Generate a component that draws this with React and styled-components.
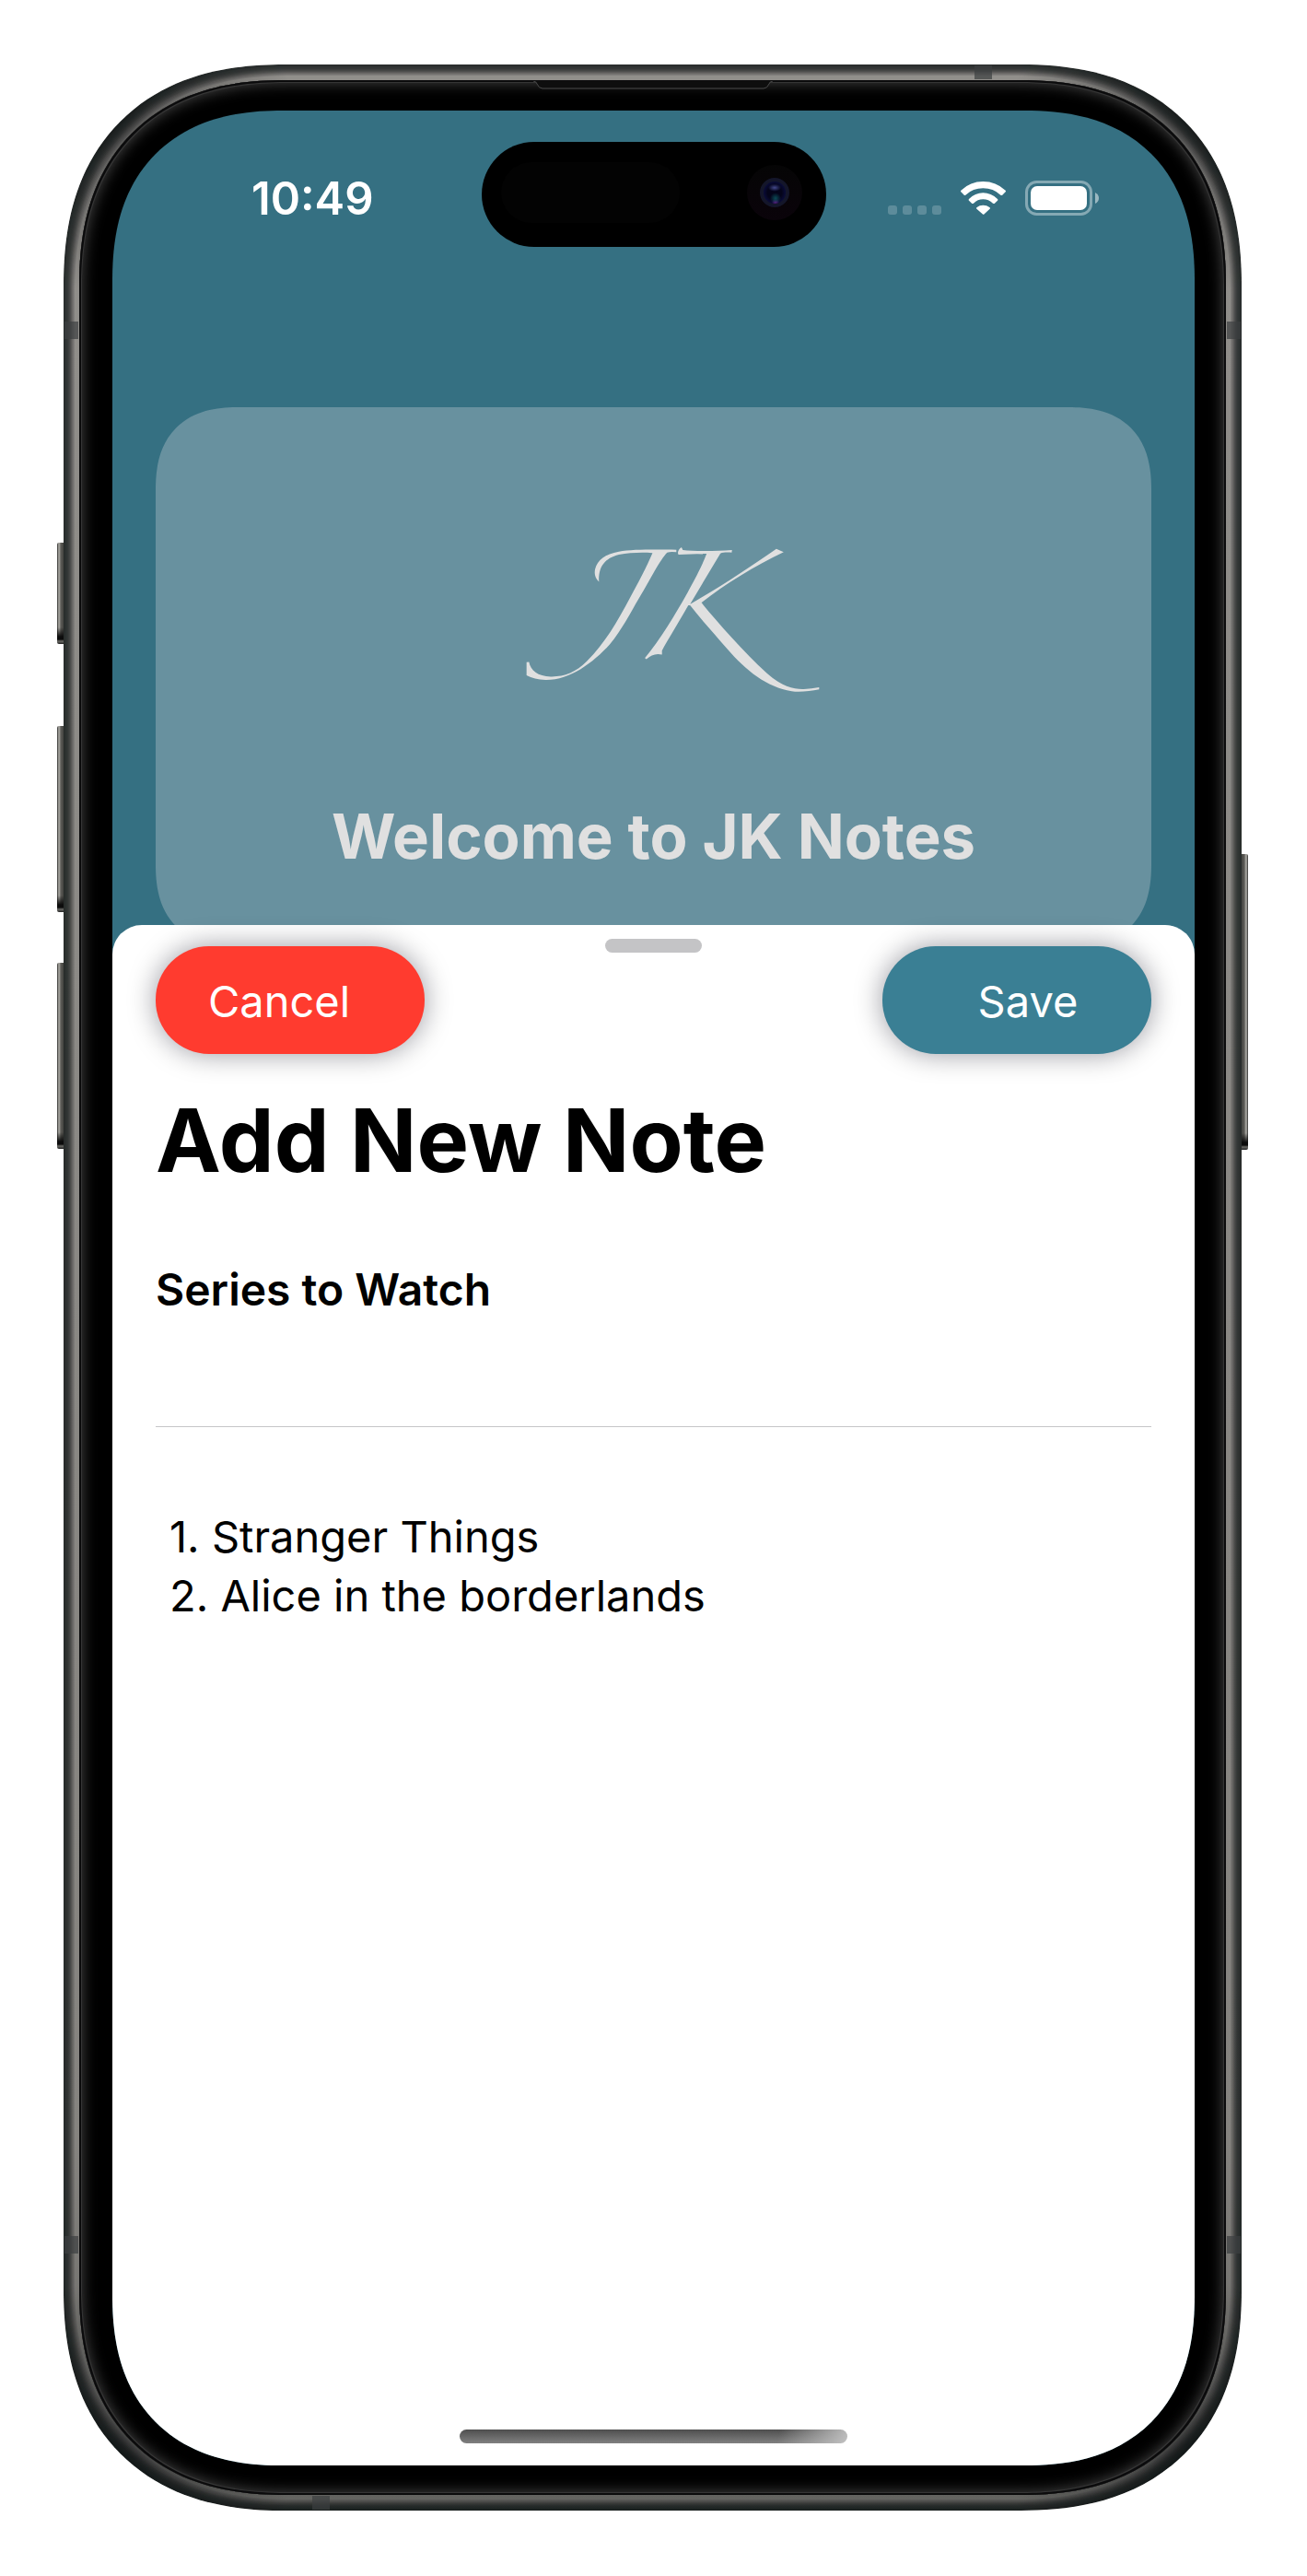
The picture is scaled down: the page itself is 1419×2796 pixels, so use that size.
import React, { useState } from "react";
import styled, { createGlobalStyle } from "styled-components";

const GlobalStyle = createGlobalStyle`
  *, *::before, *::after { box-sizing: border-box; }
  body {
    margin: 0;
    background: #ffffff;
    font-family: Inter, "Liberation Sans", sans-serif;
    color: #000000;
  }
  button, input, textarea { font: inherit; color: inherit; }
`;

const METAL = [
  [1, 0.55], [2, 0.72], [3, 0.68], [4, 0.67], [5, 0.65], [6, 0.6],
  [7, 0.54], [8, 0.47], [9, 0.38], [10, 0.28], [11, 0.2], [12, 0.12],
];

const metalRings = METAL.map(([spread, alpha], i) => {
  const next = METAL[i + 1] ? METAL[i + 1][1] : 0;
  const own = alpha > next ? 1 - (1 - alpha) / (1 - next) : 0;
  return `inset 0 0 0 ${spread}px rgba(8, 12, 14, ${own.toFixed(3)})`;
}).join(", ");

const Page = styled.div`
  display: flex;
  min-height: 100vh;
  padding: 70px 71px 71px 69px;
`;

const Device = styled.div`
  position: relative;
  flex: 1;
  display: flex;
  min-width: 0;
  padding: 17px;
  border-radius: 212px;
  background:
    radial-gradient(circle at 60px 60px, rgba(20, 22, 24, 0.5), transparent 190px),
    radial-gradient(circle at calc(100% - 60px) 60px, rgba(20, 22, 24, 0.5), transparent 190px),
    radial-gradient(circle at 60px calc(100% - 60px), rgba(20, 22, 24, 0.5), transparent 190px),
    radial-gradient(circle at calc(100% - 60px) calc(100% - 60px), rgba(20, 22, 24, 0.5), transparent 190px),
    linear-gradient(#918f8b, #85837f 85%, #62625f);
  box-shadow: ${metalRings};

  @supports (corner-shape: superellipse(1.2)) {
    border-radius: 240px;
    corner-shape: superellipse(1.22);
  }
`;

const Bezel = styled.div`
  flex: 1;
  display: flex;
  min-width: 0;
  padding: 33px 34px 32px 36px;
  border-radius: 195px;
  background: #000000;
  box-shadow:
    inset 0 0 0 2px #0b0b0c,
    inset 0 0 0 3px #353535,
    inset 0 0 16px 3px #464646;

  @supports (corner-shape: superellipse(1.2)) {
    border-radius: 223px;
    corner-shape: superellipse(1.22);
  }
`;

const Screen = styled.main`
  flex: 1;
  display: flex;
  flex-direction: column;
  min-width: 0;
  overflow: hidden;
  border-radius: 162px;
  background: #357082;

  @supports (corner-shape: superellipse(1.2)) {
    border-radius: 185px;
    corner-shape: superellipse(1.24);
  }
`;

const SideKey = styled.span`
  position: absolute;
  top: ${(p) => p.$top}px;
  ${(p) => p.$side}: -7px;
  width: 7px;
  height: ${(p) => p.$length}px;
  border-radius: ${(p) => (p.$side === "left" ? "2px 0 0 2px" : "0 2px 2px 0")};
  background:
    linear-gradient(transparent calc(100% - 18px), #0c0c0c calc(100% - 8px), #0c0c0c calc(100% - 5px), #6c6c68 calc(100% - 3px), #222222),
    linear-gradient(to ${(p) => (p.$side === "left" ? "right" : "left")}, #2c2c2b, #b3b2ac 2px, #5d5c58 4px, #444440);
`;

const Antenna = styled.span`
  position: absolute;
  background: rgba(60, 62, 64, 0.7);
  ${(p) =>
    p.$side === "left" || p.$side === "right"
      ? `${p.$side}: 1px; width: 15px; height: 19px;`
      : `${p.$side}: 1px; width: 19px; height: 15px;`}
  ${(p) => p.$place}
`;

const Earpiece = styled.svg`
  position: absolute;
  top: 18px;
  left: 510px;
  display: block;
`;

const StatusBar = styled.header`
  display: grid;
  grid-template-columns: 1fr 374px 1fr;
  align-items: center;
  justify-items: center;
  padding: 34px 34px 0;
`;

const Clock = styled.time`
  padding-top: 10px;
  font-size: 49px;
  font-weight: 600;
  line-height: 62px;
  color: #ffffff;
`;

const StatusIcons = styled.div`
  display: flex;
  align-items: center;
  gap: 21px;
  padding: 8px 2px 0 0;
`;

const SignalDots = styled.div`
  display: flex;
  gap: 6px;
  align-self: flex-end;
  padding-bottom: 1px;
`;

const SignalDot = styled.span`
  width: 10px;
  height: 10px;
  border-radius: 3px;
  background: rgba(255, 255, 255, 0.2);
`;

const Island = styled.div`
  display: flex;
  align-items: center;
  justify-content: space-between;
  width: 100%;
  height: 114px;
  padding: 0 26px 4px 21px;
  border-radius: 57px;
  background: #000000;
`;

const Sensor = styled.span`
  width: 194px;
  height: 66px;
  border-radius: 33px;
  background: #030303;
`;

const Lens = styled.span`
  display: flex;
  align-items: center;
  justify-content: center;
  width: 60px;
  height: 60px;
  border-radius: 50%;
  background: linear-gradient(#050505, #0a030a);

  &::before {
    content: "";
    width: 32px;
    height: 32px;
    border: 4px solid #14162a;
    border-radius: 50%;
    background:
      radial-gradient(ellipse 7px 4px at 50% 28%, #43488c, transparent),
      radial-gradient(circle 6px at 54% 76%, #0b4a55, transparent),
      radial-gradient(circle 4px at 54% 94%, #6a178a, transparent),
      radial-gradient(circle, #04041a 45%, #0e1150 90%);
  }
`;

const Welcome = styled.section`
  display: flex;
  flex-direction: column;
  align-items: center;
  gap: 115px;
  margin: 174px 47px 0;
  padding: 152px 40px 78px;
  border-radius: 76px;
  background: #68919f;
  color: #e0e0e0;

  @supports (corner-shape: superellipse(1.2)) {
    border-radius: 90px;
    corner-shape: superellipse(1.28);
  }
`;

const Logo = styled.div`
  display: flex;
  padding-left: 42px;
`;

const WelcomeTitle = styled.h1`
  margin: 0;
  font-size: 67px;
  font-weight: 700;
  line-height: 84px;
  text-align: center;
`;

const Sheet = styled.form`
  position: relative;
  flex: 1;
  display: flex;
  flex-direction: column;
  margin-top: -24px;
  padding: 15px 47px 24px;
  border-radius: 32px 32px 0 0;
  background: #ffffff;
`;

const SheetActions = styled.div`
  display: flex;
  justify-content: space-between;
  align-items: flex-start;
`;

const Grabber = styled.span`
  width: 105px;
  height: 15px;
  border-radius: 8px;
  background: #c4c4c6;
`;

const ActionButton = styled.button`
  width: 292px;
  height: 117px;
  margin: 8px 0 0;
  padding: ${(p) => (p.$lean === "left" ? "2px 24px 0 0" : "2px 0 0 24px")};
  border: 0;
  border-radius: 58px;
  background: ${(p) => p.$color};
  box-shadow: 0 0 30px rgba(0, 0, 20, 0.4);
  color: #ffffff;
  font-size: 47px;
  line-height: 62px;
  text-align: center;
  cursor: pointer;
`;

const SheetTitle = styled.h2`
  margin: 36px 0 73px;
  font-size: 95px;
  font-weight: 700;
  line-height: 116px;
`;

const TitleInput = styled.input`
  width: 100%;
  height: 62px;
  padding: 0;
  border: 0;
  outline: 0;
  background: transparent;
  font-size: 48px;
  font-weight: 600;
  line-height: 62px;
`;

const Divider = styled.hr`
  width: 100%;
  height: 1px;
  margin: 117px 0 87px;
  border: 0;
  background: #c6c6c8;
`;

const NoteArea = styled.textarea`
  flex: 1;
  width: 100%;
  padding: 0 15px;
  border: 0;
  outline: 0;
  resize: none;
  background: transparent;
  font-size: 47px;
  line-height: 64px;
`;

const HomeIndicator = styled.span`
  align-self: center;
  width: 421px;
  height: 15px;
  border-radius: 8px;
  background:
    linear-gradient(100deg, transparent 82%, rgba(200, 200, 200, 0.9)),
    linear-gradient(#4e4e4e, #808080);
`;

function Monogram() {
  return (
    <svg width="319" height="157" viewBox="93 102 957 473" fill="currentColor" role="img" aria-label="JK">
      <path d="M583 110V118Q565 115 553 119C530 142 500 203 460 270C430 321 405 371 365 420C310 480 235 537 155 536C130 535 110 530 93 521V478L101 477C106 505 130 524 172 525C215 526 255 511 290 475C350 415 390 345 430 270C460 215 485 168 505 121C470 118 430 120 395 126C350 137 327 165 330 215C318 203 314 190 317 174C325 142 350 124 395 116C440 108 520 110 583 110Z" />
      <path d="M600 102L604 111C640 115 710 115 765 111L764 119C750 119 735 118 727 122L628 288C720 235 820 170 910 107L934 118C840 162 740 225 665 283C720 350 800 440 880 515C930 560 970 567 1000 566Q1025 565 1050 560V567C1020 573 985 577 960 573C880 560 810 505 750 435C705 382 665 340 628 292L622 292C595 340 555 405 536 440V453C515 448 500 455 485 468L480 464C530 405 578 325 620 250C650 195 668 160 682 123C650 123 620 126 590 126C585 120 590 108 600 102Z" />
    </svg>
  );
}

function WifiIcon() {
  return (
    <svg width="49" height="36" viewBox="0 0 147 108" fill="#ffffff" aria-hidden="true">
      <path d="M1 29Q31 0 73 0T146 29Q148 32 146 34L135 45Q133 46 130 44Q106 22 73 22T16 44Q14 46 12 45L1 34Q-1 32 1 29Z" />
      <path d="M27 57Q47 37 73 37T120 57Q123 60 120 62L110 72Q108 73 105 71Q91 58 73 58T42 71Q39 73 37 72L27 62Q24 60 27 57Z" />
      <path d="M53 84Q61 77 73 77T94 84Q98 87 94 90L77 106Q74 109 71 106L53 90Q49 87 53 84Z" />
    </svg>
  );
}

function BatteryIcon() {
  return (
    <svg width="80" height="38" viewBox="0 0 80 38" aria-hidden="true">
      <rect x="1.5" y="1.5" width="70" height="35" rx="11" fill="none" stroke="#ffffff" strokeOpacity="0.4" strokeWidth="3" />
      <rect x="6" y="6" width="61" height="26" rx="7" fill="#ffffff" />
      <path d="M76 13Q80 15 80 19T76 25Z" fill="#ffffff" fillOpacity="0.5" />
    </svg>
  );
}

const KEYS = [
  { side: "left", top: 519, length: 110 },
  { side: "left", top: 718, length: 202 },
  { side: "left", top: 975, length: 202 },
  { side: "right", top: 857, length: 321 },
];

const ANTENNAS = [
  { side: "left", place: "top: 279px;" },
  { side: "right", place: "top: 279px;" },
  { side: "top", place: "right: 271px;" },
  { side: "left", place: "bottom: 279px;" },
  { side: "right", place: "bottom: 279px;" },
  { side: "bottom", place: "left: 270px;" },
];

export default function App() {
  const [title, setTitle] = useState("Series to Watch");
  const [note, setNote] = useState("1. Stranger Things\n2. Alice in the borderlands");

  return (
    <>
      <GlobalStyle />
      <Page>
        <Device>
          {KEYS.map((key) => (
            <SideKey key={key.side + key.top} $side={key.side} $top={key.top} $length={key.length} />
          ))}
          {ANTENNAS.map((band) => (
            <Antenna key={band.side + band.place} $side={band.side} $place={band.place} />
          ))}
          <Bezel>
            <Earpiece width="260" height="9" viewBox="0 0 260 9" aria-hidden="true">
              <path d="M0 0Q3 0 4 3Q6 8 10 8H250Q254 8 256 3Q257 0 260 0" fill="#0e0e0e" stroke="#4a4a4a" />
            </Earpiece>
            <Screen>
              <StatusBar>
                <Clock>10:49</Clock>
                <Island>
                  <Sensor />
                  <Lens />
                </Island>
                <StatusIcons>
                  <SignalDots>
                    <SignalDot />
                    <SignalDot />
                    <SignalDot />
                    <SignalDot />
                  </SignalDots>
                  <WifiIcon />
                  <BatteryIcon />
                </StatusIcons>
              </StatusBar>
              <Welcome>
                <Logo>
                  <Monogram />
                </Logo>
                <WelcomeTitle>Welcome to JK Notes</WelcomeTitle>
              </Welcome>
              <Sheet onSubmit={(event) => event.preventDefault()}>
                <SheetActions>
                  <ActionButton type="button" $color="#ff3b2f" $lean="left">Cancel</ActionButton>
                  <Grabber />
                  <ActionButton type="submit" $color="#3a7f94" $lean="right">Save</ActionButton>
                </SheetActions>
                <SheetTitle>Add New Note</SheetTitle>
                <TitleInput aria-label="Title" value={title} onChange={(event) => setTitle(event.target.value)} />
                <Divider />
                <NoteArea aria-label="Note" spellCheck={false} value={note} onChange={(event) => setNote(event.target.value)} />
                <HomeIndicator />
              </Sheet>
            </Screen>
          </Bezel>
        </Device>
      </Page>
    </>
  );
}
